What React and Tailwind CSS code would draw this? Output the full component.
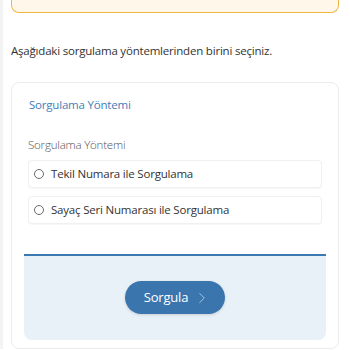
import { ChevronRight } from 'lucide-react';

const options = ['Tekil Numara ile Sorgulama', 'Sayaç Seri Numarası ile Sorgulama'];

export default function App() {
  return (
    <div className="min-h-[350px] bg-white font-['Open_Sans',sans-serif] tracking-[-0.2px] text-[#333]">
      <div className="border-l-[3px] border-[#f3f3f3] pl-2 pr-[11px]">
        <div className="h-[14px] -mt-px rounded-b-lg border-[1.5px] border-t-0 border-[#f0b640] bg-[#fff8ea]" />

        <p className="pt-[30px] text-[11.5px] leading-[16px] text-[#333]">
          Aşağıdaki sorgulama yöntemlerinden birini seçiniz.
        </p>

        <div className="mt-[23px] rounded-lg border border-[#ececec] bg-white pb-[8px]">
          <h2 className="px-[17px] pt-[14px] text-[11.5px] leading-[16px] text-[#3f80b8]">Sorgulama Yöntemi</h2>

          <div className="px-[16px] pt-[24px]">
            <label className="block text-[11.5px] font-light leading-[16px] text-[#555]">Sorgulama Yöntemi</label>
            <div className="mt-[7px] flex flex-col gap-[8px]">
              {options.map((o) => (
                <div
                  key={o}
                  className="flex h-[28px] items-center gap-[7px] rounded border border-[#f0f0f0] bg-white px-[5px] shadow-[0_1px_1px_rgba(0,0,0,0.03)]"
                >
                  <span className="h-[10px] w-[10px] rounded-full border-[1.5px] border-[#6a6a6a]" />
                  <span className="text-[11.5px] leading-[16px] text-[#333]">{o}</span>
                </div>
              ))}
            </div>
          </div>

          <div className="mx-[12px] mt-[30px] rounded-b-lg border-t-2 border-[#3b78b0] bg-[#e9f1f8] pb-[26px] pt-[25px]">
            <div className="flex justify-center">
              <button className="flex h-[33px] items-center gap-[5px] rounded-full bg-[#3a75ae] pl-[19px] pr-[14px] text-[13px] text-white shadow-[0_1px_3px_rgba(0,0,0,0.15)]">
                Sorgula
                <ChevronRight size={18} strokeWidth={1} className="text-[#c9dcef]" />
              </button>
            </div>
          </div>
        </div>
      </div>
    </div>
  );
}
